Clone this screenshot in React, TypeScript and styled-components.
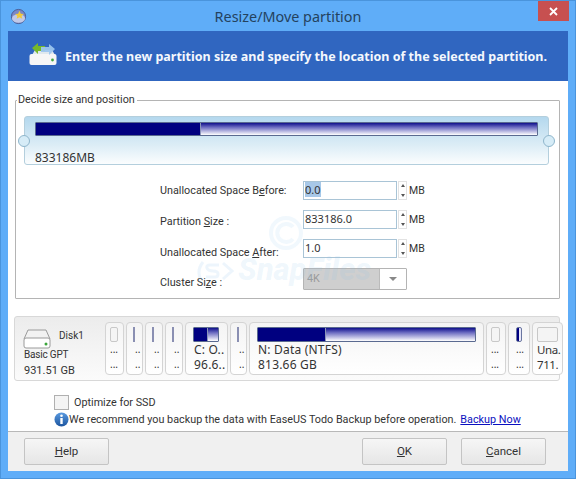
import React from "react";
import styled, { createGlobalStyle } from "styled-components";

const GlobalStyle = createGlobalStyle`
  html, body {
    margin: 0;
    padding: 0;
    background: #5fadf8;
  }
  body {
    font-family: Roboto, "Liberation Sans", sans-serif;
    font-size: 10.8px;
    color: #333;
  }
`;

const Window = styled.div`
  position: relative;
  width: 576px;
  height: 479px;
  box-sizing: border-box;
  display: flex;
  flex-direction: column;
  background: #5fadf8;
  border: 1px solid #4a94dc;
  overflow: hidden;
`;

const TitleBar = styled.div`
  height: 30px;
  flex: none;
  display: flex;
  align-items: center;
  justify-content: center;
  position: relative;
  font-family: "Noto Sans", sans-serif;
  font-size: 14.4px;
  color: #24425e;
`;

const AppIcon = styled.svg`
  position: absolute;
  left: 9px;
  top: 7px;
`;

const CloseButton = styled.div`
  position: absolute;
  right: 6px;
  top: 0;
  width: 31px;
  height: 20px;
  background: #c75050;
  display: flex;
  align-items: center;
  justify-content: center;
`;

const Client = styled.div`
  flex: 1;
  margin: 0 7px 7px;
  display: flex;
  flex-direction: column;
  background: #fff;
  min-height: 0;
`;

const Header = styled.div`
  height: 50px;
  flex: none;
  box-sizing: border-box;
  background: #3066c0;
  display: flex;
  align-items: center;
  gap: 8px;
  padding-left: 21px;
  color: #f4f8fd;
  font-family: "Noto Sans", sans-serif;
  font-weight: 700;
  font-size: 12.5px;
  white-space: nowrap;
  svg {
    margin-top: -5px;
  }
`;

const Body = styled.div`
  flex: 1;
  display: flex;
  flex-direction: column;
  padding: 11px 8px 0 7px;
`;

const Group = styled.fieldset`
  margin: 0;
  padding: 0;
  height: 207px;
  box-sizing: border-box;
  border: 1px solid #b4b4b4;
  border-radius: 1px;
`;

const GroupTitle = styled.legend`
  padding: 0 2px 0 1px;
  margin-left: 1px;
  line-height: 16px;
  color: #333;
`;

const SliderTrack = styled.div`
  position: relative;
  height: 49px;
  margin: 8px 10px 0 8px;
  box-sizing: border-box;
  padding: 5px 10px 0;
  border: 1px solid #b4cfdd;
  border-radius: 3px;
  background: linear-gradient(#b4d8ee, #dcedf6 60%, #fbfdfe);
`;

const Handle = styled.div<{ $side: "left" | "right" }>`
  position: absolute;
  top: 18px;
  ${(p) => p.$side}: -7px;
  width: 10px;
  height: 10px;
  border-radius: 50%;
  border: 1px solid #8fb6cc;
  background: #d6ecf7;
`;

const PartBar = styled.div`
  height: 14px;
  box-sizing: border-box;
  border: 1px solid #5a6a90;
  border-radius: 1px;
  display: flex;
  background: linear-gradient(#10108c, #6a6ac0 35%, #ffffff);
`;

const PartUsed = styled.div<{ $used: number }>`
  width: ${(p) => p.$used}%;
  background: #000080;
  border-right: 1px solid #8a94b8;
`;

const SliderText = styled.div`
  margin-top: 14px;
  font-family: "Noto Sans", sans-serif;
  font-size: 12px;
  line-height: 16px;
`;

const Form = styled.div`
  display: grid;
  grid-template-columns: 143px 94px 10px auto;
  grid-auto-rows: 19px;
  row-gap: 10px;
  align-items: center;
  margin: 16px 0 0 144px;
`;

const Label = styled.label<{ $drop: number }>`
  grid-column: 1;
  padding-top: ${(p) => p.$drop}px;
`;

const NumberBox = styled.div<{ $selected?: boolean }>`
  height: 19px;
  box-sizing: border-box;
  border: 1px solid #a9c4d6;
  padding-left: 1px;
  line-height: 16px;
  font-family: "Noto Sans", sans-serif;
  font-size: 11px;
  span {
    background: ${(p) => (p.$selected ? "#a8c8e8" : "transparent")};
  }
`;

const Spinner = styled.div`
  height: 19px;
  display: flex;
  flex-direction: column;
  justify-content: space-between;
  align-items: center;
  margin-left: 1px;
  border: 1px solid #e2e2e2;
  box-sizing: border-box;
  padding: 2px 0;
`;

const Arrow = styled.div<{ $up?: boolean }>`
  width: 0;
  height: 0;
  border-left: 2.5px solid transparent;
  border-right: 2.5px solid transparent;
  ${(p) => (p.$up ? "border-bottom" : "border-top")}: 3px solid #555;
`;

const Unit = styled.span`
  padding-left: 2px;
  font-size: 10.5px;
`;

const Combo = styled.div`
  grid-column: 2 / 5;
  width: 104px;
  height: 22px;
  box-sizing: border-box;
  display: flex;
  border: 1px solid #b4b4b4;
  border-radius: 1px;
  margin-top: 3px;
`;

const ComboValue = styled.div`
  flex: 1;
  background: #cfcfcf;
  color: #9a9a9a;
  line-height: 20px;
  padding-left: 3px;
  border-right: 1px solid #bbb;
`;

const ComboArrow = styled.div`
  width: 26px;
  display: flex;
  align-items: center;
  justify-content: center;
  &::after {
    content: "";
    border-left: 4px solid transparent;
    border-right: 4px solid transparent;
    border-top: 4px solid #888;
  }
`;

const Watermark = styled.div`
  position: absolute;
  left: 194px;
  top: 214px;
  width: 200px;
  height: 70px;
  pointer-events: none;
`;

const WatermarkCircle = styled.svg`
  position: absolute;
  left: 73px;
  top: 0;
`;

const WatermarkLogo = styled.svg`
  position: absolute;
  left: 0;
  top: 46px;
`;

const WatermarkName = styled.div`
  position: absolute;
  left: 43px;
  top: 38px;
  font-size: 31px;
  line-height: 34px;
  font-weight: 800;
  font-style: italic;
  color: rgba(140, 195, 235, 0.14);
  white-space: nowrap;
`;

const DiskPanel = styled.div`
  margin: 17px 0 0 -1px;
  height: 65px;
  box-sizing: border-box;
  padding: 5px 1px 5px 0;
  display: flex;
  gap: 2px;
  border: 1px solid #d8d8d8;
  border-radius: 3px;
  background: linear-gradient(#ececec, #fbfbfb);
`;

const DiskInfo = styled.div`
  width: 88px;
  flex: none;
  padding-left: 9px;
  box-sizing: border-box;
`;

const DiskHead = styled.div`
  display: flex;
  align-items: flex-start;
  gap: 8px;
  height: 25px;
  svg {
    margin: 7px 0 0 -1px;
    flex: none;
  }
`;

const DiskName = styled.div`
  font-size: 10px;
  line-height: 12px;
  margin-top: 8px;
`;

const DiskLine = styled.div<{ $big?: boolean }>`
  font-size: ${(p) => (p.$big ? "11px" : "10px")};
  letter-spacing: ${(p) => (p.$big ? "0" : "-0.2px")};
  line-height: 16px;
`;

const Tile = styled.div<{ $width: number; $pad: number }>`
  width: ${(p) => p.$width}px;
  flex: none;
  box-sizing: border-box;
  padding: 4px 0 0 ${(p) => p.$pad}px;
  border: 1px solid #d4d4d4;
  border-radius: 4px;
  background: linear-gradient(#f4f4f4, #ffffff);
  display: flex;
  flex-direction: column;
  overflow: hidden;
  white-space: nowrap;
`;

const TileBarSlot = styled.div<{ $inset: number }>`
  height: 15px;
  margin-right: ${(p) => p.$inset}px;
  display: flex;
  flex: none;
`;

const ThinLine = styled.div`
  flex: none;
  width: 2px;
  height: 15px;
  margin-left: -2px;
  background: #8a8fb2;
`;

const EmptyBar = styled.div`
  width: 100%;
  height: 15px;
  box-sizing: border-box;
  border: 1px solid #c8c8c8;
  border-radius: 2px;
  background: #f4f4f4;
`;

const TinyBar = styled.div`
  flex: none;
  width: 6px;
  height: 15px;
  box-sizing: border-box;
  border: 1px solid #6a76a0;
  border-radius: 2px;
  background: linear-gradient(90deg, #000080 50%, #e8e8f8 50%);
`;

const TileBar = styled(PartBar)`
  width: 100%;
  height: 15px;
`;

const TileText = styled.div<{ $size: "small" | "big" | "tight" }>`
  font-family: "Noto Sans", sans-serif;
  font-size: ${(p) => (p.$size === "small" ? "10px" : p.$size === "tight" ? "11.5px" : "12px")};
  line-height: 15px;
  letter-spacing: ${(p) => (p.$size === "big" ? "0.2px" : p.$size === "tight" ? "-0.4px" : "0")};
  padding-left: ${(p) => (p.$size === "big" ? "1px" : "0")};
`;

const Options = styled.div`
  padding: 13px 0 0 39px;
`;

const CheckRow = styled.label`
  display: flex;
  align-items: center;
  gap: 5px;
  height: 16px;
`;

const CheckBox = styled.span`
  width: 13px;
  height: 13px;
  border: 1px solid #b0b0b0;
  background: #f4f4f4;
`;

const InfoRow = styled.div`
  display: flex;
  align-items: center;
  height: 18px;
  white-space: nowrap;
  svg {
    flex: none;
  }
`;

const BackupLink = styled.a`
  margin-left: 4px;
  color: #0a10c0;
  text-decoration: underline;
`;

const Footer = styled.div`
  height: 40px;
  flex: none;
  box-sizing: border-box;
  border-top: 1px solid #b8b8b8;
  background: #f0f0f0;
  display: flex;
  align-items: center;
  gap: 14px;
  padding: 0 22px 1px 16px;
`;

const Button = styled.button<{ $push?: boolean }>`
  width: 85px;
  height: 27px;
  padding: 0;
  font: inherit;
  font-size: 11.5px;
  color: #333;
  border: 1px solid #c4c4c4;
  border-radius: 2px;
  background: linear-gradient(#f6f6f6, #e6e6e6);
  margin-right: ${(p) => (p.$push ? "auto" : "0")};
`;

const sizeRows = [
  { label: <>Unallocated Space B<u>e</u>fore:</>, value: "0.0", selected: true, drop: 0 },
  { label: <>Partition <u>S</u>ize :</>, value: "833186.0", drop: 4 },
  { label: <>Unallocated Space <u>A</u>fter:</>, value: "1.0", drop: 7 },
];

type TileData = {
  width: number;
  pad: number;
  inset: number;
  kind: "empty" | "thin" | "tiny" | "bar";
  used?: number;
  top: string;
  bottom: string;
  size: "small" | "big" | "tight";
};

const tiles: TileData[] = [
  { width: 19, pad: 4, inset: 5, kind: "empty", top: "...", bottom: "...", size: "small" },
  { width: 17, pad: 8, inset: 0, kind: "thin", top: "..", bottom: "..", size: "small" },
  { width: 18, pad: 8, inset: 0, kind: "thin", top: "..", bottom: "..", size: "small" },
  { width: 18, pad: 8, inset: 0, kind: "thin", top: "..", bottom: "..", size: "small" },
  { width: 43, pad: 7, inset: 8, kind: "bar", used: 56, top: "C: O..", bottom: "96.6..", size: "big" },
  { width: 17, pad: 8, inset: 0, kind: "thin", top: "..", bottom: "..", size: "small" },
  { width: 235, pad: 7, inset: 7, kind: "bar", used: 31, top: "N: Data (NTFS)", bottom: "813.66 GB", size: "big" },
  { width: 20, pad: 4, inset: 5, kind: "empty", top: "...", bottom: "...", size: "small" },
  { width: 22, pad: 7, inset: 0, kind: "tiny", top: "...", bottom: "...", size: "small" },
  { width: 31, pad: 4, inset: 4, kind: "empty", top: "Una.", bottom: "711.", size: "tight" },
];

const DiskIcon = ({ width, height }: { width: number; height: number }) => (
  <svg width={width} height={height} viewBox="0 0 28 20">
    <path d="M5 1h18l4 9H1z" fill="#f2f2f2" stroke="#9a9a9a" />
    <rect x="1" y="9" width="26" height="10" rx="2" fill="#fff" stroke="#9a9a9a" />
    <circle cx="23" cy="15" r="1.5" fill="#3aa53a" />
  </svg>
);

const renderTileBar = (tile: TileData) => {
  if (tile.kind === "thin") return <ThinLine />;
  if (tile.kind === "empty") return <EmptyBar />;
  if (tile.kind === "tiny") return <TinyBar />;
  return (
    <TileBar>
      <PartUsed $used={tile.used ?? 0} />
    </TileBar>
  );
};

export default function App() {
  return (
    <>
      <GlobalStyle />
      <Window>
        <TitleBar>
          <AppIcon width="17" height="17" viewBox="0 0 18 18">
            <circle cx="9" cy="9" r="7.5" fill="#7a88c8" stroke="#4a5a90" />
            <ellipse cx="9" cy="11" rx="7" ry="4.5" fill="#dfe6f5" opacity="0.7" />
            <path d="M10 3l1.4 3 3.2.3-2.4 2.1.8 3.1L10 9.9l-3 1.6.8-3.1-2.4-2.1 3.2-.3z" fill="#f0c93c" />
          </AppIcon>
          Resize/Move partition
          <CloseButton>
            <svg width="9" height="9" viewBox="0 0 9 9">
              <path d="M1 1l7 7M8 1L1 8" stroke="#fff" strokeWidth="1.8" />
            </svg>
          </CloseButton>
        </TitleBar>
        <Client>
          <Header>
            <svg width="28" height="24" viewBox="0 0 28 24">
              <path d="M3 13L6 8h17l3 5z" fill="#dfe8ee" />
              <rect x="0.5" y="12" width="27" height="11" rx="2" fill="#f6f6f6" />
              <circle cx="23.5" cy="18" r="1.4" fill="#3fa53f" />
              <path d="M3 6l6-5v3h7v5H9v3z" fill="#76b82a" />
              <path d="M26 7l-6-5v3h-8v5h8v3z" fill="#9cc6ee" opacity="0.95" />
            </svg>
            Enter the new partition size and specify the location of the selected partition.
          </Header>
          <Body>
            <Group>
              <GroupTitle>Decide size and position</GroupTitle>
              <SliderTrack>
                <Handle $side="left" />
                <Handle $side="right" />
                <PartBar>
                  <PartUsed $used={32.8} />
                </PartBar>
                <SliderText>833186MB</SliderText>
              </SliderTrack>
              <Form>
                {sizeRows.map((row) => (
                  <React.Fragment key={row.value}>
                    <Label $drop={row.drop}>{row.label}</Label>
                    <NumberBox $selected={row.selected}>
                      <span>{row.value}</span>
                    </NumberBox>
                    <Spinner>
                      <Arrow $up />
                      <Arrow />
                    </Spinner>
                    <Unit>MB</Unit>
                  </React.Fragment>
                ))}
                <Label $drop={10}>Cluster Si<u>z</u>e :</Label>
                <Combo>
                  <ComboValue>4K</ComboValue>
                  <ComboArrow />
                </Combo>
              </Form>
            </Group>
            <DiskPanel>
              <DiskInfo>
                <DiskHead>
                  <DiskIcon width={28} height={20} />
                  <DiskName>Disk1</DiskName>
                </DiskHead>
                <DiskLine>Basic GPT</DiskLine>
                <DiskLine $big>931.51 GB</DiskLine>
              </DiskInfo>
              {tiles.map((tile, i) => (
                <Tile key={i} $width={tile.width} $pad={tile.pad}>
                  <TileBarSlot $inset={tile.inset}>{renderTileBar(tile)}</TileBarSlot>
                  <TileText $size={tile.size}>{tile.top}</TileText>
                  <TileText $size={tile.size}>{tile.bottom}</TileText>
                </Tile>
              ))}
            </DiskPanel>
            <Options>
              <CheckRow>
                <CheckBox />
                Optimize for SSD
              </CheckRow>
              <InfoRow>
                <svg width="15" height="15" viewBox="0 0 15 15">
                  <defs>
                    <linearGradient id="infoFill" x1="0" y1="0" x2="0" y2="1">
                      <stop offset="0" stopColor="#5a9ae0" />
                      <stop offset="1" stopColor="#1c559f" />
                    </linearGradient>
                  </defs>
                  <circle cx="7.5" cy="7.5" r="7" fill="url(#infoFill)" />
                  <circle cx="7.5" cy="3.8" r="1.3" fill="#fff" />
                  <rect x="6.3" y="6" width="2.4" height="6" fill="#fff" />
                </svg>
                We recommend you backup the data with EaseUS Todo Backup before operation.
                <BackupLink>Backup Now</BackupLink>
              </InfoRow>
            </Options>
          </Body>
          <Footer>
            <Button $push><u>H</u>elp</Button>
            <Button><u>O</u>K</Button>
            <Button><u>C</u>ancel</Button>
          </Footer>
        </Client>
        <Watermark>
          <WatermarkCircle width="36" height="36" viewBox="0 0 36 36">
            <circle cx="18" cy="18" r="15" fill="none" stroke="rgba(140,195,235,0.12)" strokeWidth="4" />
            <path d="M25 12a9 9 0 1 0 0 12" fill="none" stroke="rgba(140,195,235,0.12)" strokeWidth="4" />
          </WatermarkCircle>
          <WatermarkLogo width="40" height="20" viewBox="0 0 40 20">
            <path
              d="M8 1Q1 10 6 19M24 4H15q-4 0-3 3t6 3 5 3-3 3h-9M28 2l9 8-9 8"
              fill="none"
              stroke="rgba(140,195,235,0.16)"
              strokeWidth="3"
            />
          </WatermarkLogo>
          <WatermarkName>SnapFiles</WatermarkName>
        </Watermark>
      </Window>
    </>
  );
}
